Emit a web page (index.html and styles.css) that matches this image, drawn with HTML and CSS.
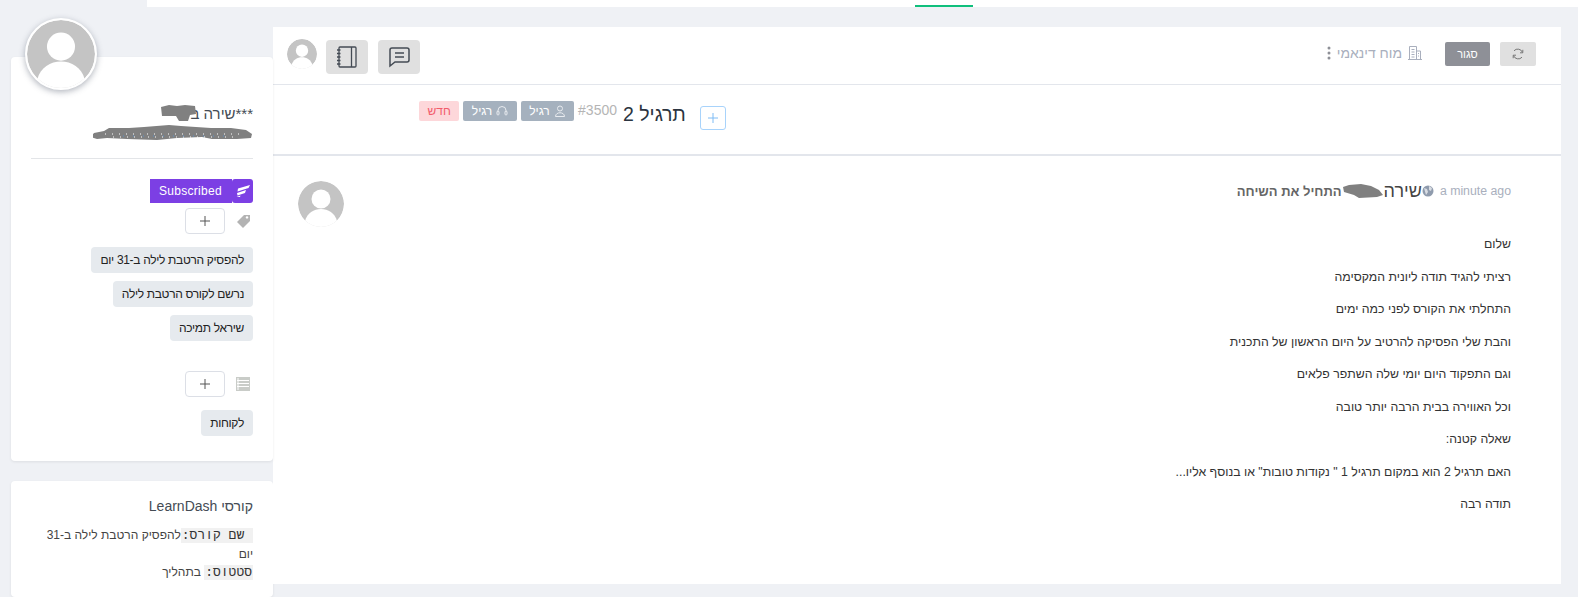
FILE: index.html
```html
<!DOCTYPE html>
<html lang="he">
<head>
    <meta charset="UTF-8">
    <title>תרגיל 2</title>
    <link rel="stylesheet" href="styles.css">
</head>
<body>
    <!-- Top bar -->
    <div class="topbar"><span class="topbar-active"></span></div>

    <div class="page">
        <!-- Sidebar -->
        <aside class="sidebar">
            <div class="card profile" dir="rtl">
                <svg class="avatar avatar-big" viewBox="0 0 46 46"><use href="#person"></use></svg>
                <div class="name">***שירה ב<svg class="blob blob-name" viewBox="0 0 38 18"><path d="M1 3l8-2 8 1 8-1 10 1 1 8-6 1-2 6-9 0-3-5-14 0z"/></svg></div>
                <svg class="blob-mail" viewBox="0 0 160 15"><path d="M1 8l10-2 5-3 20 0 15-1 25-2 12 1 30 2 20 0 15 2 6 4-1 4-14 1-25 0-10-2-25 1-20 2-30-1-20-1-10 1-6-2z"/><path d="M12 9h140M20 12h125" stroke="#fff" stroke-width="1" stroke-dasharray="1 6" fill="none"/><path d="M30 11h110" stroke="#5b8fc7" stroke-width="1" stroke-dasharray="1 9" fill="none"/></svg>
                <hr class="divider">

                <div class="subscribed">
                    <span class="sub-logo">
                        <svg viewBox="0 0 16 14" width="16" height="14"><path d="M3 4.500L15 1l-1.500 3L2.500 7.500z M2 9l9-3-1 3-7.500 2.500z M1.500 13l4-1.500-.5 1.500z" fill="#fff"/></svg>
                    </span>
                    <span class="sub-text" dir="ltr">Subscribed</span>
                </div>

                <div class="add-row">
                    <svg class="side-icon" viewBox="0 0 14 14"><path d="M14 1v6l-7 7-6-6 7-7z" fill="#b3b3b3"/><circle cx="11" cy="3.400" r="1.200" fill="#fff"/></svg>
                    <button class="add-btn"><svg viewBox="0 0 10 10" width="10" height="10"><path d="M5 0v10M0 5h10" stroke="#555" fill="none"/></svg></button>
                </div>
                <div class="tags">
                    <span class="tag">להפסיק הרטבת לילה ב-31 יום</span>
                    <span class="tag">נרשם לקורס הרטבת לילה</span>
                    <span class="tag">שיראל תמיכה</span>
                </div>

                <div class="add-row add-row-list">
                    <svg class="side-icon" viewBox="0 0 14 14"><path d="M0 0h14v14H0z" fill="#c9ccc8"/><path d="M2 1v12M1 3.500h12M1 6.500h12M1 9.500h12" stroke="#fff" fill="none"/></svg>
                    <button class="add-btn"><svg viewBox="0 0 10 10" width="10" height="10"><path d="M5 0v10M0 5h10" stroke="#555" fill="none"/></svg></button>
                </div>
                <div class="tags">
                    <span class="tag">לקוחות</span>
                </div>
            </div>

            <div class="card courses" dir="rtl">
                <h4>קורסי LearnDash</h4>
                <p><code>&nbsp;שם קורס:</code>להפסיק הרטבת לילה ב-31 יום<br><code>סטטוס:</code> בתהליך</p>
            </div>
        </aside>

        <!-- Main ticket -->
        <main class="ticket">
            <div class="ticket-head">
                <div class="head-left">
                    <svg class="avatar avatar-small" viewBox="0 0 46 46"><use href="#person"></use></svg>
                    <button class="icon-btn">
                        <svg viewBox="0 0 22 22" width="22" height="22" fill="none" stroke="#444b54" stroke-width="1.300"><rect x="3" y="1" width="17" height="20" rx="1"/><path d="M15.500 1v20M1 4h3.500M1 7.500h3.500M1 11h3.500M1 14.500h3.500M1 18h3.500"/></svg>
                    </button>
                    <button class="icon-btn">
                        <svg viewBox="0 0 22 22" width="22" height="22" fill="none" stroke="#444b54" stroke-width="1.500"><path d="M4 2h15a2 2 0 0 1 2 2v10a2 2 0 0 1-2 2H7l-5 4V4a2 2 0 0 1 2-2z"/><path d="M7 7h9M7 11h9"/></svg>
                    </button>
                </div>
                <div class="head-right">
                    <svg class="dots" viewBox="0 0 4 14" width="4" height="14"><circle cx="2" cy="2" r="1.500"/><circle cx="2" cy="7" r="1.500"/><circle cx="2" cy="12" r="1.500"/></svg>
                    <span class="board" dir="rtl">מוח דינאמי</span>
                    <svg class="board-icon" viewBox="0 0 14 14" width="14" height="14" fill="none" stroke="#a9afbd"><path d="M0 13.500h14M1.500 13.500V.5h7v13M8.500 5h4v8.500M3.500 3.500h3M3.500 6h3M3.500 8.500h3M3.500 11h3M10 7.500h1M10 10h1"/></svg>
                    <button class="close-btn">סגור</button>
                    <button class="refresh-btn">
                        <svg viewBox="0 0 12 12" width="12" height="12" fill="none" stroke="#777"><path d="M10.500 4.500A5 5 0 0 0 2 2.800M1.500 7.500A5 5 0 0 0 10 9.200"/><path d="M10.800 1.800v3H8M1.200 10.200v-3H4"/></svg>
                    </button>
                </div>
            </div>

            <div class="ticket-title">
                <span class="badge badge-new">חדש</span>
                <span class="badge">
                    <span dir="rtl">רגיל</span>
                    <svg viewBox="0 0 12 12" width="12" height="12" fill="none" stroke="#e8ebef"><path d="M2 7V5.500a4 4 0 0 1 8 0V7"/><rect x="1" y="6" width="2" height="4" rx="1"/><rect x="9" y="6" width="2" height="4" rx="1"/></svg>
                </span>
                <span class="badge">
                    <span dir="rtl">רגיל</span>
                    <svg viewBox="0 0 12 12" width="12" height="12" fill="none" stroke="#e8ebef"><circle cx="6" cy="3.500" r="2.500"/><path d="M1.500 11.500c0-5 9-5 9 0z"/></svg>
                </span>
                <span class="ticket-no">#3500</span>
                <h2 dir="rtl">תרגיל 2</h2>
                <button class="title-add"><svg viewBox="0 0 10 10" width="10" height="10"><path d="M5 0v10M0 5h10" stroke="#7fbcf5" fill="none"/></svg></button>
            </div>

            <div class="message">
                <svg class="avatar avatar-msg" viewBox="0 0 46 46"><use href="#person"></use></svg>
                <div class="message-body" dir="rtl">
                    <div class="message-meta">
                        <span class="time" dir="ltr">a minute ago</span>
                        <svg class="globe" viewBox="0 0 12 12" width="12" height="12"><circle cx="6" cy="6" r="5.500" fill="#8f9bad"/><path d="M2 3l3 1 1 3-2 3zM7 1l3 2-1 3-2-1z" fill="#d9dde3"/></svg>
                        <span class="who">שירה</span>
                        <svg class="blob-who" viewBox="0 0 42 14"><path d="M1 3l6-2 12-1 10 2 8 4 4 5-6 2-18 1-5-3-10-3z"/></svg>
                        <strong>התחיל את השיחה</strong>
                    </div>
                    <div class="message-text">
                        <p>שלום</p>
                        <p>רציתי להגיד תודה ליונית המקסימה</p>
                        <p>התחלתי את הקורס לפני כמה ימים</p>
                        <p>והבת שלי הפסיקה להרטיב על היום הראשון של התכנית</p>
                        <p>וגם התפקוד היום יומי שלה השתפר פלאים</p>
                        <p>וכל האווירה בבית הרבה יותר טובה</p>
                        <p>שאלה קטנה:</p>
                        <p>האם תרגיל 2 הוא במקום תרגיל 1 " נקודות טובות" או בנוסף אליו...</p>
                        <p>תודה רבה</p>
                    </div>
                </div>
            </div>
        </main>
    </div>

    <!-- shared avatar drawing -->
    <svg class="sprite" width="0" height="0">
        <symbol id="person" viewBox="0 0 46 46">
            <circle cx="23" cy="23" r="23" fill="#c4c4c4"/>
            <circle cx="23" cy="18" r="9.500" fill="#fff"/>
            <path d="M7 40c2-8 9-12 16-12s14 4 16 12a23 23 0 0 1-32 0z" fill="#fff"/>
        </symbol>
    </svg>
</body>
</html>
```

FILE: styles.css
```css
html, body {
    height: 597px;
    overflow: hidden;
}
body {
    margin: 0;
    background-color: #eff1f5;
    font-family: "Liberation Sans", Arial, sans-serif;
    color: #333;
}
button {
    font-family: inherit;
    border: none;
    padding: 0;
    cursor: pointer;
}
.sprite {
    position: absolute;
}

/* Top bar */
.topbar {
    height: 7px;
    margin-left: 147px;
    background: #fff;
    position: relative;
}
.topbar-active {
    position: absolute;
    left: 768px;
    top: 5px;
    width: 58px;
    height: 2px;
    background: #10bf7c;
}

.page {
    display: flex;
    align-items: flex-start;
    padding: 20px 17px 0 11px;
}

/* Sidebar */
.sidebar {
    width: 262px;
    flex-shrink: 0;
    margin-top: 30px;
    display: flex;
    flex-direction: column;
    gap: 20px;
}
.card {
    background: #fff;
    border-radius: 4px;
    box-shadow: 0 1px 3px rgba(0, 0, 0, 0.08);
    padding: 0 20px;
    box-sizing: border-box;
}
.profile {
    position: relative;
    height: 404px;
    padding-top: 47px;
}
.avatar {
    display: block;
    border-radius: 50%;
    flex-shrink: 0;
}
.avatar-big {
    position: absolute;
    left: 14px;
    top: -39px;
    width: 72px;
    height: 72px;
    box-sizing: border-box;
    border: 2px solid #fff;
    background: #fff;
    box-shadow: 0 2px 6px rgba(60, 70, 90, 0.4);
}
.name {
    position: relative;
    font-size: 15px;
    line-height: 18px;
    color: #444b54;
    padding-top: 1px;
}
.blob {
    fill: #808080;
}
.blob-name {
    position: absolute;
    right: 55px;
    top: 0;
    width: 38px;
    height: 18px;
}
.blob-mail {
    display: block;
    fill: #808080;
    width: 160px;
    height: 15px;
    margin-top: 2px;
}
.divider {
    border: none;
    border-top: 1px solid #e3e5e8;
    margin: 18px 0 20px;
}
.subscribed {
    display: flex;
    width: fit-content;
    height: 24px;
    color: #fff;
    font-size: 12px;
    letter-spacing: 0.3px;
    line-height: 24px;
}
.sub-logo {
    width: 21px;
    background: #7c3fe4;
    border-radius: 3px;
    display: flex;
    align-items: center;
    justify-content: center;
}
.sub-text {
    background: #7c3fe4;
    padding: 0 10px 0 9px;
}
.add-row {
    display: flex;
    align-items: center;
    gap: 11px;
    margin-top: 5px;
    padding-right: 3px;
}
.add-row-list {
    margin-top: 30px;
}
.side-icon {
    width: 14px;
    height: 14px;
}
.add-btn {
    width: 40px;
    height: 26px;
    background: #fff;
    border: 1px solid #dcdfe6;
    border-radius: 4px;
    display: flex;
    align-items: center;
    justify-content: center;
}
.tags {
    display: flex;
    flex-direction: column;
    align-items: flex-start;
    gap: 8px;
    margin-top: 13px;
}
.tag {
    background: #e6eaee;
    border-radius: 4px;
    font-size: 12px;
    letter-spacing: -0.32px;
    line-height: 26px;
    padding: 0 9px;
    color: #222;
}
.courses {
    height: 116px;
    padding-top: 16px;
}
.courses h4 {
    margin: 0;
    font-size: 14px;
    font-weight: 400;
    line-height: 18px;
    color: #444b54;
}
.courses p {
    margin: 11px 0 0;
    font-size: 12px;
    line-height: 18px;
    color: #444;
}
code {
    font-family: "Liberation Mono", monospace;
    font-size: 13px;
    background: #f1f1f1;
    color: #333;
    padding: 0 1px;
}

/* Ticket */
.ticket {
    flex: 1;
    height: 557px;
    background: #fff;
}
.ticket-head {
    height: 57px;
    border-bottom: 1px solid #e3e6ec;
    display: flex;
    justify-content: space-between;
    align-items: flex-start;
    padding: 0 25px 0 14px;
}
.head-left {
    display: flex;
    align-items: center;
    gap: 10px;
    padding-top: 13px;
}
.avatar-small {
    width: 30px;
    height: 30px;
    margin-right: -1px;
    margin-top: -6px;
}
.icon-btn {
    width: 42px;
    height: 34px;
    background: #e0e0e0;
    border-radius: 4px;
    display: flex;
    align-items: center;
    justify-content: center;
}
.head-right {
    display: flex;
    align-items: center;
    padding-top: 15px;
}
.dots {
    fill: #8e9097;
    margin-right: 6px;
    margin-top: -2px;
}
.board {
    font-size: 14px;
    color: #a9afbd;
    margin-right: 6px;
    margin-top: -3px;
}
.board-icon {
    margin-right: 23px;
    margin-top: -2px;
}
.close-btn {
    width: 45px;
    height: 24px;
    background: #8e9097;
    border-radius: 2px;
    color: #fff;
    font-size: 11px;
    margin-right: 10px;
}
.refresh-btn {
    width: 36px;
    height: 24px;
    background: #e0e0e0;
    border-radius: 2px;
    display: flex;
    align-items: center;
    justify-content: center;
}
.ticket-title {
    height: 71px;
    box-sizing: border-box;
    border-bottom: 2px solid #e3e6ec;
    display: flex;
    align-items: flex-start;
    padding: 16px 0 0 146px;
}
.badge {
    height: 20px;
    display: flex;
    align-items: center;
    gap: 4px;
    padding: 0 8.500px;
    margin-right: 4px;
    background: #a5b1be;
    border-radius: 2px;
    color: #fff;
    font-size: 12px;
}
.badge-new {
    background: #fdd7da;
    color: #f25b6a;
}
.ticket-no {
    font-size: 14px;
    line-height: 18px;
    color: #b5b5b5;
    margin: 0 6px 0 0;
}
.ticket-title h2 {
    margin: 0;
    font-size: 19.500px;
    font-weight: 400;
    line-height: 26px;
    color: #2b3440;
}
.title-add {
    width: 26px;
    height: 24px;
    margin: 5px 0 0 14px;
    background: #fff;
    border: 1px solid #a8d3fb;
    border-radius: 3px;
    display: flex;
    align-items: center;
    justify-content: center;
}
.message {
    display: flex;
    justify-content: space-between;
    padding: 25px 50px 0 25px;
}
.avatar-msg {
    width: 46px;
    height: 46px;
}
.message-meta {
    display: flex;
    align-items: center;
    height: 20px;
}
.time {
    font-size: 12.300px;
    color: #a9afbd;
}
.globe {
    margin: 0 6px 0 0;
}
.who {
    font-size: 18px;
    color: #444;
}
.blob-who {
    width: 42px;
    height: 14px;
    fill: #808080;
}
.message-meta strong {
    font-size: 13px;
    color: #666;
}
.message-text {
    margin-top: 34px;
    font-size: 12.300px;
    color: #333;
}
.message-text p {
    margin: 0 0 14px;
    line-height: 18.500px;
}
```
